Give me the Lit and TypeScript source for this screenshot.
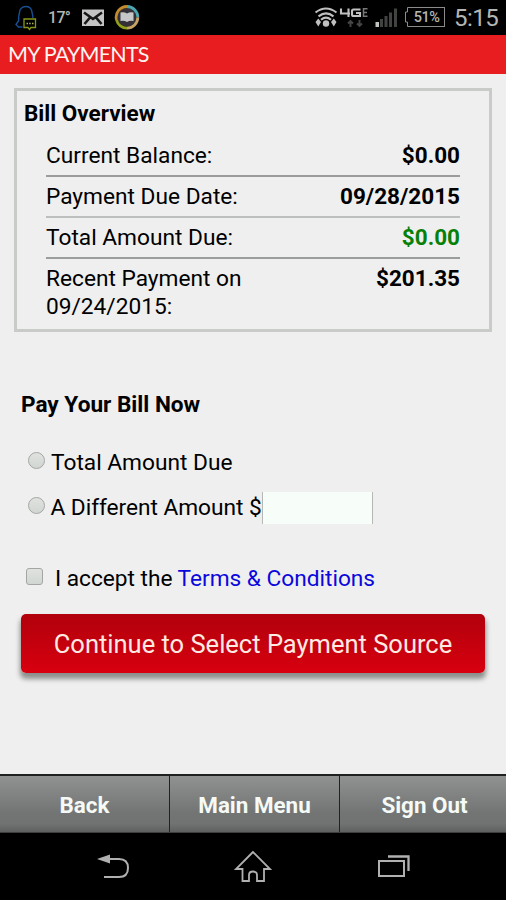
import { LitElement, html, css } from "lit";
import { customElement } from "lit/decorators.js";
import { classMap } from "lit/directives/class-map.js";

interface BillRow {
  label: string;
  value: string;
  paid?: boolean;
  soft?: boolean;
}

const ROWS: BillRow[] = [
  { label: "Current Balance:", value: "$0.00" },
  { label: "Payment Due Date:", value: "09/28/2015", soft: true },
  { label: "Total Amount Due:", value: "$0.00", paid: true },
  { label: "Recent Payment on 09/24/2015:", value: "$201.35" },
];

@customElement("status-bar")
class StatusBar extends LitElement {
  static styles = css`
    :host { display: flex; height: 35px; background: #000; color: #b4b6b4; align-items: center; }
    svg { display: block; flex: none; }
    .bell { margin-left: 14px; }
    .temp { font: 500 16px/20px Roboto, sans-serif; letter-spacing: -0.7px; margin-left: 10px; width: 33px; margin-top: 1px; white-space: nowrap; }
    .book { margin-left: 9px; }
    .fill { flex: 1; }
    .clock { font: 400 24px/28px Roboto, sans-serif; width: 44px; margin: 1px 8px 0 9px; letter-spacing: -0.5px; text-align: right; white-space: nowrap; }
    .battery { display: flex; align-items: center; margin-left: 8px; }
    .cell { box-sizing: border-box; width: 36px; height: 20px; border: 1px solid #8a8c8a; border-left: 0; font: 500 14.5px/20px Roboto, sans-serif; letter-spacing: -0.5px; text-align: center; margin-top: -1px; }
    .cap { margin-top: -1px; }
  `;
  render() {
    return html`
      <svg class="bell" width="24" height="35" viewBox="0 0 24 35" fill="none">
        <path d="M8.500 27H4.500L2 24.500L4.500 21L4.800 16L6 10Q8 6.500 12 6.500T17.500 10L18.800 16V18" stroke="#164f92" stroke-width="1.400"/>
        <path d="M10 19H21.500V27.500H17L15.500 29.500L14 27.500H10Z" stroke="#87971b" stroke-width="1.300"/>
        <path d="M12.500 23.500H14M15.200 23.500H16.700M18 23.500H19.500" stroke="#a7b84b" stroke-width="1.600"/>
      </svg>
      <span class="temp">17°</span>
      <svg width="24" height="35" viewBox="0 0 24 35">
        <rect x="1" y="9.500" width="22" height="16.500" fill="#c4c4c4"/>
        <path d="M3 12.500L12 19L21 12.500M3.500 24L9 17.500M20.500 24L15 17.500" stroke="#171717" stroke-width="2.600" fill="none"/>
      </svg>
      <svg class="book" width="26" height="35" viewBox="0 0 26 35" fill="none">
        <circle cx="13" cy="17.300" r="9.500" fill="#353037"/>
        <path d="M13 6.500A10.800 10.800 0 0 1 23.800 17.300" stroke="#4da7b3" stroke-width="2.800"/>
        <path d="M23.800 17.300A10.800 10.800 0 0 1 13 28.100" stroke="#c5a365" stroke-width="2.800"/>
        <path d="M13 28.100A10.800 10.800 0 0 1 2.500 20" stroke="#93a01d" stroke-width="2.800"/>
        <path d="M2.500 20A10.800 10.800 0 0 1 13 6.500" stroke="#c18b2e" stroke-width="2.800"/>
        <path d="M6.500 12.500Q10 11.500 13 13.500Q16 11.500 19.500 12.500V21Q16 20 13 22Q10 20 6.500 21Z" fill="#c6c7c9"/>
      </svg>
      <span class="fill"></span>
      <svg width="88" height="35" viewBox="0 0 88 35" fill="none">
        <path d="M6.500 12.500Q17 4.500 27.500 12.500M9.500 16.300Q17 10.500 24.500 16.300M12 19.700Q17 15.500 22 19.700" stroke="#bfc1bf" stroke-width="2.100"/>
        <circle cx="17" cy="23.500" r="3.200" fill="#bfc1bf"/>
        <path d="M6.500 22L9.300 18.500L12 22L9.300 26.500ZM22 22L24.800 18.500L27.500 22L24.800 26.500Z" fill="#bfc1bf"/>
        <path d="M32 8.500V13.500H41M39.500 8.500V17M51.500 9.500H44.500Q43 9.500 43 11V14.500Q43 16 44.500 16H51V13H47" stroke="#bfc1bf" stroke-width="2.100"/>
        <path d="M58.500 8.800H54.500V16.200H58.500M54.500 12.500H58" stroke="#777977" stroke-width="1.500"/>
        <path d="M41.500 27V21M39 23.500L41.500 21L44 23.500" stroke="#444644" stroke-width="1.900"/>
        <path d="M50.500 20V26M48 23.500L50.500 26L53 23.500" stroke="#444644" stroke-width="1.900"/>
        <path d="M66.500 22H70V27H66.500Z" fill="#c2c4c2"/>
        <path d="M71 19H74V27H71ZM75.500 16H78.500V27H75.500ZM80 12.500H83V27H80ZM85 8.500H88V27H85Z" fill="#414341"/>
      </svg>
      <div class="battery">
        <svg class="cap" width="4" height="20" viewBox="0 0 4 20" fill="none"><path d="M4 .5H2.500V5H.5V15H2.500V19.500H4" stroke="#8a8c8a"/></svg>
        <div class="cell">51%</div>
      </div>
      <span class="clock">5:15</span>
    `;
  }
}

@customElement("bill-overview")
class BillOverview extends LitElement {
  static styles = css`
    :host { display: block; box-sizing: border-box; height: 244px; border: 3px solid #c8cbc8; padding: 8px 29px 0 29px; font: 400 22.7px/28px Roboto, sans-serif; color: #000; }
    h2 { font: 700 22.5px/28px Roboto, sans-serif; margin: 0 0 9px -22px; }
    .row { display: flex; justify-content: space-between; padding: 6px 0 5px; border-bottom: 2px solid #9b9c9c; }
    .row.soft { border-color: #bdbebe; }
    .row:last-child { border: 0; }
    .label { width: 215px; }
    .value { font-weight: 700; font-size: 22.5px; margin-top: -1px; }
    .paid { color: #078007; }
  `;
  render() {
    return html`
      <h2>Bill Overview</h2>
      ${ROWS.map(
        (r) => html`<div class=${classMap({ row: true, soft: !!r.soft })}>
          <span class="label">${r.label}</span>
          <span class=${classMap({ value: true, paid: !!r.paid })}>${r.value}</span>
        </div>`
      )}
    `;
  }
}

@customElement("app-root")
class AppRoot extends LitElement {
  static styles = css`
    :host { display: flex; flex-direction: column; width: 506px; height: 900px; background: #efefef; overflow: hidden; color: #000; font: 400 22.7px/28px Roboto, sans-serif; }
    .title { height: 39px; background: #e71d20; color: #fff4ee; font: 400 21.5px/39px Lato, sans-serif; letter-spacing: -0.8px; padding-left: 8px; margin: 0; }
    main { flex: 1; display: flex; flex-direction: column; padding: 14px 14px 0; }
    h2 { font: 700 22.6px/28px Roboto, sans-serif; margin: 59px 0 0 7px; }
    .choice { display: flex; align-items: center; height: 34px; margin-left: 14px; white-space: nowrap; }
    .total { margin-top: 27px; }
    .other { margin-top: 11px; letter-spacing: -0.04px; }
    .radio { box-sizing: border-box; width: 17px; height: 17px; border-radius: 50%; border: 1px solid #a3a6a3; background: linear-gradient(#dfe2df, #d2d6d2); margin: -6px 6px 0 0; }
    .other .radio { margin: -6px 5.5px 0 0; }
    .amount { box-sizing: border-box; width: 111px; height: 32px; border: solid #b5b8b5; border-width: 0 1px; background: #f7fdf8; padding: 0; margin-top: -1px; border-radius: 0; }
    .accept { margin: 37px 0 0 12px; letter-spacing: -0.02px; }
    .check { box-sizing: border-box; width: 17px; height: 17px; border: 1px solid #a3a6a3; border-radius: 3px; background: linear-gradient(#dfe2df, #d2d6d2); margin: -6px 12px 0 0; }
    a { color: #0a08dc; }
    .go { font: 400 25.5px/60px Roboto, sans-serif; height: 59px; width: 464px; margin: 18px 0 0 7px; padding: 0; border: 0; border-radius: 5px; color: #fdeae2; background: linear-gradient(#b1000c, #d8000f); box-shadow: 0 5px 5px 1px #8c8f8c; }
    .tabs { display: grid; grid-template-columns: 170px 170px 1fr; height: 59px; box-sizing: border-box; border-top: 2px solid #1f2120; border-bottom: 1px solid #3c3f3e; }
    .tab { font: 700 22.4px/58px Roboto, sans-serif; height: 56px; box-sizing: border-box; color: #f5faf7; text-align: center; background: linear-gradient(#8f9291, #727574 65%, #707372 85%, #5e6160); border-right: 1px solid #202221; }
    .tab:last-child { border: 0; padding-left: 3px; }
    .nav { height: 67px; background: #000; }
    .nav svg { display: block; }
  `;
  render() {
    return html`
      <status-bar></status-bar>
      <h1 class="title">MY PAYMENTS</h1>
      <main>
        <bill-overview></bill-overview>
        <h2>Pay Your Bill Now</h2>
        <div class="choice total"><span class="radio"></span><span>Total Amount Due</span></div>
        <div class="choice other"><span class="radio"></span><span>A Different Amount $</span><input class="amount" /></div>
        <div class="choice accept"><span class="check"></span><span>I accept the <a>Terms &amp; Conditions</a></span></div>
        <button class="go">Continue to Select Payment Source</button>
      </main>
      <div class="tabs">
        <div class="tab">Back</div><div class="tab">Main Menu</div><div class="tab">Sign Out</div>
      </div>
      <div class="nav">
        <svg width="506" height="67" viewBox="0 833 506 67" fill="none" stroke="#b0b0b0" stroke-width="2">
          <path d="M108 859H119Q128 859 128 868T119 877H104"/>
          <path d="M97 859L110 854.500V863.500Z" fill="#b0b0b0" stroke="none"/>
          <path d="M253 852L236 869H242.500V881H249V875Q249 871.500 253 871.500T257 875V881H264V869H270L253 852Z" stroke-width="1.800"/>
          <path d="M379 861H404V876H379Z"/>
          <path d="M388 856.500H408.500V871" stroke-width="2.300"/>
        </svg>
      </div>
    `;
  }
}
